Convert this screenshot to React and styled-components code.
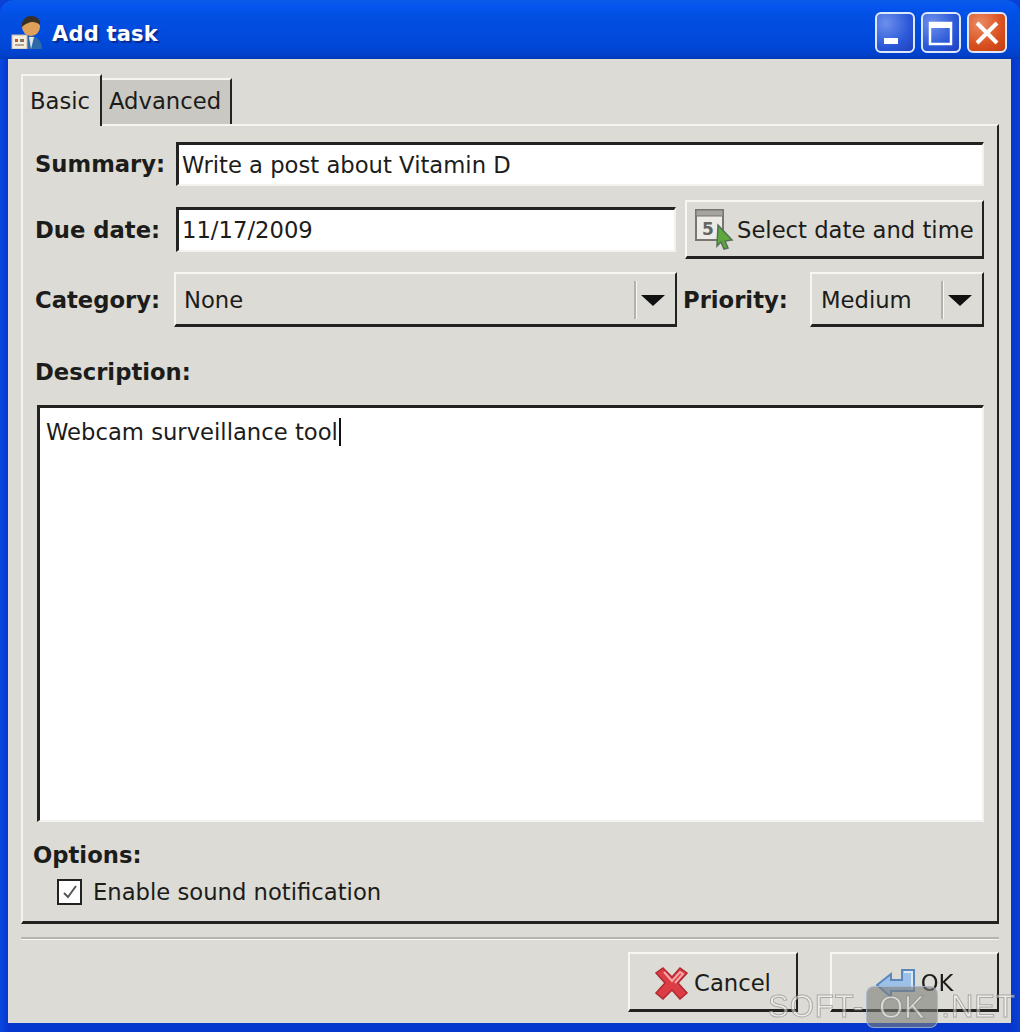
import React from 'react'
import styled, { createGlobalStyle } from 'styled-components'

const uiFont = `"DejaVu Sans", Verdana, sans-serif`
const face = '#dcdbd6'
const dark = '#222220'

const Global = createGlobalStyle`
  html, body { margin: 0; padding: 0; background: #0a3fd8; }
  * { box-sizing: border-box; }
`

const Window = styled.div`
  position: relative;
  width: 1020px;
  height: 1032px;
  display: flex;
  flex-direction: column;
  overflow: hidden;
  font-family: ${uiFont};
  font-size: 22.7px;
  color: #1c1c1a;
  background: linear-gradient(90deg, #0a49e0 0, #0537cf 8px, #0537cf 1011px, #0a3fd0 100%);
  border-radius: 14px 14px 0 0;
  filter: blur(0.5px);
`

const TitleBar = styled.div`
  flex: none;
  height: 59px;
  display: flex;
  align-items: center;
  padding: 0 13px 0 11px;
  background: linear-gradient(180deg, #0a5ae6 0, #0455f0 6px, #0250e4 14px, #0148d8 45px, #0040c8 56px, #0138b4 100%);
`

const TitleIcon = styled.svg`
  width: 32px;
  height: 34px;
  margin-top: 4px;
`

const TitleText = styled.div`
  flex: 1;
  margin: 8px 0 0 9px;
  font-weight: 700;
  font-size: 21px;
  letter-spacing: 0.2px;
  color: #fff;
  text-shadow: 2px 2px 1px #0a2a90;
`

const Controls = styled.div`
  display: flex;
  gap: 6px;
  margin-top: 6px;
`

const ControlButton = styled.div`
  width: 40px;
  height: 41px;
  border: 2px solid #dfe8fb;
  border-radius: 6px;
  display: flex;
  align-items: center;
  justify-content: center;
  background: ${p => p.$close
    ? 'radial-gradient(circle at 30% 25%, #ec8a62, #d9501f 60%, #c23c10)'
    : 'radial-gradient(circle at 25% 25%, #6d90ec, #2b59d8 60%, #1e3fbe)'};
`

const Client = styled.div`
  flex: none;
  height: 964px;
  margin: 0 9px 0 8px;
  padding: 14px 12px 0 13px;
  background: ${face};
  display: flex;
  flex-direction: column;
`

const TabStrip = styled.div`
  flex: none;
  height: 51px;
  display: flex;
  align-items: flex-end;
`

const Tab = styled.div`
  height: ${p => (p.$active ? 52 : 46)}px;
  width: ${p => (p.$active ? 81 : 130)}px;
  padding-left: 7px;
  padding-top: ${p => (p.$active ? 10 : 6)}px;
  background: ${p => (p.$active ? face : '#c9c8c2')};
  border-top: 2px solid #f4f4f1;
  border-left: ${p => (p.$active ? '2px solid #f4f4f1' : 'none')};
  border-right: 2px solid ${dark};
  margin-bottom: ${p => (p.$active ? '-2px' : '0')};
  position: relative;
  z-index: 1;
  line-height: 30px;
`

const Panel = styled.div`
  flex: none;
  height: 800px;
  width: 978px;
  padding: 16px 13px 0 12px;
  display: flex;
  flex-direction: column;
  border-top: 2px solid #f4f4f1;
  border-left: 2px solid #f4f4f1;
  border-right: 2px solid ${dark};
  border-bottom: 3px solid ${dark};
`

const Row = styled.div`
  flex: none;
  height: ${p => p.$height}px;
  margin-bottom: ${p => p.$gap || 0}px;
  display: flex;
  align-items: center;
`

const Label = styled.div`
  flex: none;
  width: ${p => p.$width || 'auto'};
  font-weight: 700;
  white-space: nowrap;
`

const PriorityLabel = styled(Label)`
  padding-left: 6px;
`

const Field = styled.div`
  height: ${p => p.$height || 45}px;
  flex: ${p => (p.$width ? 'none' : 1)};
  width: ${p => (p.$width ? `${p.$width}px` : 'auto')};
  display: flex;
  align-items: center;
  padding-left: 3px;
  background: #fff;
  border-top: 3px solid ${dark};
  border-left: 3px solid ${dark};
  border-right: 2px solid #f2f2ef;
  border-bottom: 2px solid #f2f2ef;
  white-space: nowrap;
`

const RaisedButton = styled.div`
  flex: none;
  width: ${p => p.$width}px;
  height: ${p => p.$height}px;
  display: flex;
  align-items: center;
  background: ${face};
  border-top: 2px solid #f6f6f3;
  border-left: 2px solid #f6f6f3;
  border-right: 2px solid ${dark};
  border-bottom: 3px solid ${dark};
  white-space: nowrap;
`

const DateButton = styled(RaisedButton)`
  margin-left: 9px;
  padding: 2px 0 0 8px;
`

const Select = styled(RaisedButton)`
  padding: 2px 0 0 ${p => (p.$grow ? 8 : 9)}px;
  flex: ${p => (p.$grow ? 1 : 'none')};
`

const SelectValue = styled.div`
  flex: 1;
`

const SelectDivider = styled.div`
  width: 3px;
  height: 38px;
  background: #b3b2ac;
  border-right: 1px solid #f6f6f3;
`

const Arrow = styled.div`
  width: 0;
  height: 0;
  margin: 0 10px 0 4px;
  border-left: 12px solid transparent;
  border-right: 12px solid transparent;
  border-top: 11px solid #111;
`

const SectionLabel = styled(Label)`
  height: 30px;
  line-height: 30px;
  margin: ${p => p.$margin};
`

const Description = styled.div`
  flex: none;
  height: 417px;
  width: 947px;
  margin-left: 2px;
  padding: 7px 6px;
  background: #fff;
  border-top: 3px solid ${dark};
  border-left: 3px solid ${dark};
  border-right: 2px solid #f2f2ef;
  border-bottom: 2px solid #f2f2ef;
  line-height: 34px;
`

const Caret = styled.span`
  display: inline-block;
  width: 2px;
  height: 28px;
  margin-left: 1px;
  vertical-align: -6px;
  background: #111;
`

const CheckRow = styled.div`
  display: flex;
  align-items: center;
  margin: 9px 0 0 22px;
`

const CheckBox = styled.div`
  width: 25px;
  height: 26px;
  margin-right: 11px;
  background: #fff;
  border: 2px solid #222;
  display: flex;
  align-items: center;
  justify-content: center;
`

const Separator = styled.div`
  flex: none;
  width: 978px;
  height: 3px;
  margin-top: 13px;
  background: #b5b4ae;
  border-bottom: 1px solid #f6f6f3;
`

const Footer = styled.div`
  flex: none;
  width: 978px;
  margin-top: 12px;
  display: flex;
  justify-content: flex-end;
  gap: 32px;
`

const DialogButton = styled(RaisedButton)`
  justify-content: center;
  gap: 5px;
  padding-top: 2px;
`

const CalendarSvg = styled.svg`
  flex: none;
  margin-top: -2px;
`

const Watermark = styled.div`
  position: absolute;
  left: 768px;
  top: 986px;
  height: 42px;
  display: flex;
  align-items: center;
  font-family: "Liberation Sans", Arial, sans-serif;
  font-size: 31px;
  letter-spacing: 1px;
  line-height: 42px;
  color: rgba(255, 255, 255, 0.5);
  -webkit-text-stroke: 1px rgba(120, 120, 115, 0.55);
  white-space: nowrap;
`

const WatermarkBadge = styled.span`
  width: 72px;
  height: 42px;
  margin: 0 3px 0 2px;
  text-align: center;
  border-radius: 8px;
  background: rgba(125, 125, 120, 0.6);
  border: 1px solid rgba(180, 195, 225, 0.7);
  color: rgba(255, 255, 255, 0.6);
`

const PersonIcon = () => (
  <TitleIcon viewBox="0 0 32 34">
    <path d="M10 34c0-9 5-13 10-13s11 4 11 13z" fill="#2f6aa8" />
    <path d="M18 22l2 12 3-12z" fill="#dfe6ee" />
    <circle cx="20" cy="12" r="9" fill="#dfa05a" />
    <path d="M11 12c-1-7 4-11 9-11s10 3 9 9c-3-3-6-3-9-3-3 1-6 2-9 5z" fill="#3a3024" />
    <rect x="1" y="20" width="15" height="14" fill="#f3eee4" stroke="#c9b8a0" />
    <rect x="4" y="24" width="3" height="3" fill="#c2542e" />
    <rect x="9" y="24" width="4" height="3" fill="#8a6f56" />
    <rect x="4" y="29" width="9" height="2" fill="#b9a68e" />
  </TitleIcon>
)

const CalendarIcon = () => (
  <CalendarSvg width="42" height="42" viewBox="0 0 42 42">
    <rect x="1" y="2" width="27" height="30" fill="#ecebe6" stroke="#77766f" strokeWidth="2" />
    <rect x="1" y="2" width="27" height="6" fill="#a5a49e" stroke="#77766f" strokeWidth="1" />
    <text x="7" y="27" fontFamily="DejaVu Sans" fontWeight="700" fontSize="17" fill="#66655f">5</text>
    <path d="M23 17l14 15-7 1 3 7-4 1-3-7-4 4z" fill="#5fa83c" stroke="#54705a" strokeWidth="1.5" />
  </CalendarSvg>
)

const CancelIcon = () => (
  <svg width="34" height="34" viewBox="0 0 34 34">
    <path d="M8 2l9 9 8-9 7 5-9 10 9 10-7 6-8-9-9 9-7-6 9-10-9-10z" fill="#dc3c44" stroke="#b02a30" strokeWidth="1.5" />
    <path d="M9 6l8 9 8-9 3 2-8 9" fill="none" stroke="#f4a9ab" strokeWidth="2" />
  </svg>
)

const OkIcon = () => (
  <svg width="40" height="30" viewBox="0 0 40 30">
    <path d="M1 17l14-11v6h11V2h12v21H15v6z" fill="#9cc0e6" stroke="#5a88bd" strokeWidth="2" />
    <path d="M28 4h8v17" fill="none" stroke="#dbe9f7" strokeWidth="2" />
  </svg>
)

const App = () => (
  <>
    <Global />
    <Window>
      <TitleBar>
        <PersonIcon />
        <TitleText>Add task</TitleText>
        <Controls>
          <ControlButton>
            <svg width="28" height="28" viewBox="0 0 28 28">
              <rect x="3" y="19" width="14" height="6" fill="#fff" />
            </svg>
          </ControlButton>
          <ControlButton>
            <svg width="28" height="28" viewBox="0 0 28 28">
              <path d="M3 4h21v21H3z" fill="none" stroke="#fff" strokeWidth="2.5" />
              <rect x="3" y="4" width="21" height="5" fill="#fff" />
            </svg>
          </ControlButton>
          <ControlButton $close>
            <svg width="28" height="28" viewBox="0 0 28 28">
              <path d="M4 4l20 20M24 4L4 24" stroke="#fff" strokeWidth="4" />
            </svg>
          </ControlButton>
        </Controls>
      </TitleBar>
      <Client>
        <TabStrip>
          <Tab $active>Basic</Tab>
          <Tab>Advanced</Tab>
        </TabStrip>
        <Panel>
          <Row $height={44} $gap={14}>
            <Label $width="141px">Summary:</Label>
            <Field $height={44}>Write a post about Vitamin D</Field>
          </Row>
          <Row $height={59} $gap={13}>
            <Label $width="141px">Due date:</Label>
            <Field $width={500}>11/17/2009</Field>
            <DateButton $width={299} $height={59}>
              <CalendarIcon />
              Select date and time
            </DateButton>
          </Row>
          <Row $height={55}>
            <Label $width="139px">Category:</Label>
            <Select $grow $height={55}>
              <SelectValue>None</SelectValue>
              <SelectDivider />
              <Arrow />
            </Select>
            <PriorityLabel $width="133px">Priority:</PriorityLabel>
            <Select $width={174} $height={55}>
              <SelectValue>Medium</SelectValue>
              <SelectDivider />
              <Arrow />
            </Select>
          </Row>
          <SectionLabel $margin="30px 0 18px 0">Description:</SectionLabel>
          <Description>
            Webcam surveillance tool<Caret />
          </Description>
          <SectionLabel $margin="18px 0 0 -2px">Options:</SectionLabel>
          <CheckRow>
            <CheckBox>
              <svg width="16" height="16" viewBox="0 0 16 16">
                <path d="M2 9l4 4 8-11" fill="none" stroke="#555" strokeWidth="2" />
              </svg>
            </CheckBox>
            Enable sound notification
          </CheckRow>
        </Panel>
        <Separator />
        <Footer>
          <DialogButton $width={170} $height={60}>
            <CancelIcon />
            Cancel
          </DialogButton>
          <DialogButton $width={169} $height={60}>
            <OkIcon />
            OK
          </DialogButton>
        </Footer>
      </Client>
      <Watermark>
        SOFT-<WatermarkBadge>OK</WatermarkBadge>.NET
      </Watermark>
    </Window>
  </>
)

export default App
